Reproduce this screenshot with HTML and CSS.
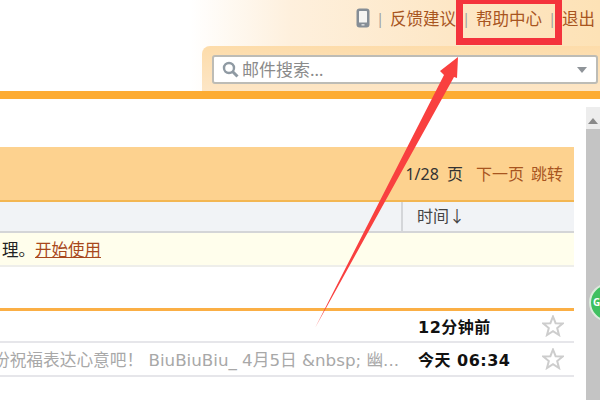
FILE: index.html
```html
<!DOCTYPE html>
<html>
<head>
  <meta charset="utf-8">
  <link rel="stylesheet" href="styles.css">
</head>
<body>
  <div class="page">
    <div class="header">
      <div class="top-links">
        <svg class="phone" width="14" height="20" viewBox="0 0 14 20"><rect x="0.5" y="0.5" width="13" height="19" rx="3" fill="#868e96"/><rect x="3" y="3" width="8" height="11.5" rx="0.5" fill="#f6f5f2"/><rect x="5.5" y="16" width="3" height="1.6" fill="#d5d8da"/></svg>
        <span class="sep">|</span>
        <a class="link">反馈建议</a>
        <span class="sep">|</span>
        <a class="link">帮助中心</a>
        <span class="sep">|</span>
        <a class="link">退出</a>
      </div>
      <div class="search-tab">
        <div class="search-box">
          <svg width="17" height="17" viewBox="0 0 17 17"><circle cx="7" cy="7" r="5" fill="none" stroke="#8f9aa3" stroke-width="2.4"/><path d="M10.5 10.5l5 5" stroke="#8f9aa3" stroke-width="3"/></svg>
          <span class="search-text">邮件搜索…</span>
          <span class="caret"></span>
        </div>
      </div>
    </div>
    <div class="orange-band"></div>
    <div class="main">
      <div class="content">
        <div class="pager-bar">
          <span class="pages">1/28 页</span>
          <a class="link next">下一页</a>
          <a class="link">跳转</a>
        </div>
        <div class="col-head">
          <div class="col-time">时间↓</div>
        </div>
        <div class="notice"><span class="notice-text">理。</span><a class="start">开始使用</a></div>
        <div class="group-gap"></div>
        <div class="mail-row first">
          <span class="time">12分钟前</span>
          <svg class="star" width="22" height="22" viewBox="0 0 22 22"><polygon points="11,1.5 13.6,8.2 20.7,8.5 15.2,13 17,20 11,16.1 5,20 6.8,13 1.3,8.5 8.4,8.2" fill="#ffffff" stroke="#cdcdcd" stroke-width="2"/></svg>
        </div>
        <div class="mail-row">
          <span class="preview">份祝福表达心意吧！ BiuBiuBiu_ 4月5日 &amp;nbsp; 幽...</span>
          <span class="time">今天 06:34</span>
          <svg class="star" width="22" height="22" viewBox="0 0 22 22"><polygon points="11,1.5 13.6,8.2 20.7,8.5 15.2,13 17,20 11,16.1 5,20 6.8,13 1.3,8.5 8.4,8.2" fill="#ffffff" stroke="#cdcdcd" stroke-width="2"/></svg>
        </div>
      </div>
      <div class="scroll-side">
        <div class="scroll-up"><span class="scroll-arrow"></span></div>
        <div class="badge">G</div>
      </div>
    </div>
  </div>
  <div class="highlight"></div>
  <svg class="pointer" width="600" height="400" viewBox="0 0 600 400"><polygon points="458,57 440,71 444,75 315,328 454,77 457,78" fill="#f9403f"/></svg>
</body>
</html>
```
FILE: styles.css
```css
* {
  box-sizing: border-box;
}

body {
  margin: 0;
  width: 600px;
  height: 400px;
  overflow: hidden;
  background-color: #ffffff;
  font-family: "Noto Sans", "Noto Sans CJK SC", sans-serif;
  font-size: 16px;
  color: #222222;
  position: relative;
}

.header {
  height: 91px;
  padding-top: 8px;
  background: linear-gradient(90deg, #ffffff 0, #ffffff 190px, #fef0dd 290px, #fde7c6 450px, #fde2b6 600px);
}

.top-links {
  display: flex;
  align-items: center;
  height: 20px;
  padding-left: 356px;
  font-size: 16.5px;
}

.phone {
  flex-shrink: 0;
}

.link {
  color: #a8551f;
  white-space: nowrap;
}

.sep {
  color: #9a9a9a;
  font-size: 14px;
  width: 20px;
  text-align: center;
  flex-shrink: 0;
}

.search-tab {
  margin: 18px 0 0 202px;
  height: 45px;
  padding: 9px 2px 0 10px;
  background: linear-gradient(180deg, #fddcaa, #fde6c6);
  border-radius: 8px 0 0 0;
}

.search-box {
  display: flex;
  align-items: center;
  gap: 3px;
  height: 29px;
  padding: 0 9px 0 8px;
  background-color: #ffffff;
  border: 2px solid #bdbcb6;
  border-radius: 3px;
}

.search-text {
  flex: 1;
  color: #8a8a8a;
  font-size: 17px;
  line-height: 25px;
  white-space: nowrap;
}

.caret {
  border-left: 5px solid transparent;
  border-right: 5px solid transparent;
  border-top: 6px solid #8f9499;
}

.orange-band {
  height: 8px;
  background-color: #fdac33;
}

.main {
  display: flex;
  height: 301px;
}

.content {
  width: 574px;
  flex-shrink: 0;
  padding-top: 48px;
}

.pager-bar {
  display: flex;
  align-items: center;
  justify-content: flex-end;
  gap: 7px;
  height: 55px;
  padding-right: 11px;
  padding-bottom: 2px;
  background-color: #fdd28f;
  border-bottom: 2px solid #f3b652;
}

.pages {
  color: #333333;
  word-spacing: 4px;
  margin-right: 6px;
}

.col-head {
  display: flex;
  justify-content: flex-end;
  height: 31px;
  background-color: #f1f3f6;
  border-bottom: 2px solid #d4d5d7;
}

.col-time {
  width: 173px;
  padding-left: 14px;
  line-height: 29px;
  color: #444444;
  border-left: 2px solid #d4d6d9;
}

.notice {
  height: 34px;
  line-height: 33px;
  font-size: 16.5px;
  background-color: #fffeec;
  border-bottom: 2px solid #eeeeea;
  white-space: nowrap;
}

.notice-text {
  margin-left: 2px;
}

.start {
  color: #a8481c;
  text-decoration: underline;
}

.group-gap {
  height: 44px;
  border-bottom: 3px solid #fbaf45;
}

.mail-row {
  display: flex;
  align-items: center;
  justify-content: flex-end;
  height: 34px;
  padding-right: 10px;
  border-bottom: 2px solid #e6e6ea;
  position: relative;
}

.mail-row.first {
  height: 32px;
}

.preview {
  position: absolute;
  left: -7px;
  color: #a8a8a8;
  font-family: "DejaVu Sans", "Noto Sans CJK SC", sans-serif;
  font-size: 16.7px;
  white-space: nowrap;
}

.time {
  font-family: "DejaVu Sans", "Noto Sans CJK SC", sans-serif;
  font-weight: bold;
  font-size: 16px;
  letter-spacing: 0.5px;
  color: #111111;
  position: absolute;
  left: 418px;
}

.star {
  flex-shrink: 0;
}

.scroll-side {
  width: 14px;
  flex-shrink: 0;
  margin-left: 12px;
  margin-top: 8px;
  background-color: #c4c4c4;
  position: relative;
  overflow: hidden;
}

.scroll-up {
  display: flex;
  justify-content: center;
  align-items: center;
  height: 22px;
  padding-top: 6px;
  background-color: #ededed;
}

.scroll-arrow {
  border-left: 5px solid transparent;
  border-right: 5px solid transparent;
  border-bottom: 6px solid #8a8a8a;
}

.badge {
  position: absolute;
  left: 3px;
  top: 176px;
  width: 39px;
  height: 39px;
  border-radius: 50%;
  background-color: #3fc060;
  border: 2px solid #dcebdd;
  color: #ffffff;
  font-size: 10px;
  font-weight: bold;
  line-height: 35px;
  padding-left: 2px;
}

.highlight {
  position: absolute;
  left: 456px;
  top: -3px;
  width: 106px;
  height: 48px;
  border: 7px solid #f4333c;
}

.pointer {
  position: absolute;
  left: 0;
  top: 0;
}
```
